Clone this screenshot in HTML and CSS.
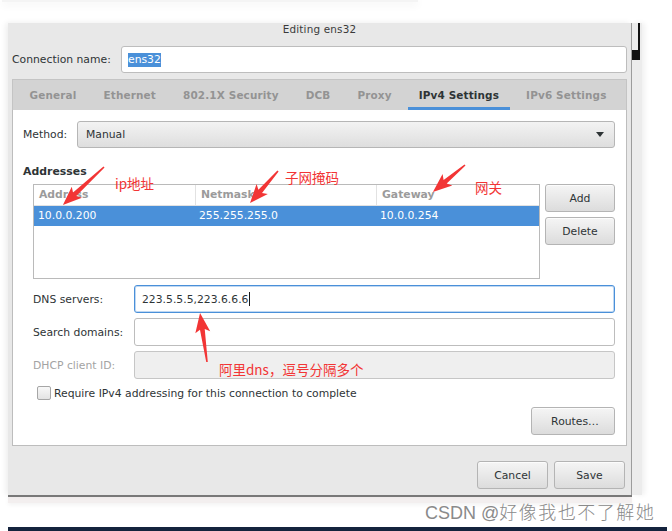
FILE: index.html
```html
<!DOCTYPE html>
<html lang="en">
<head>
<meta charset="utf-8">
<title>Editing ens32</title>
<link rel="stylesheet" href="styles.css">
</head>
<body>
<div class="topcard"></div>
<div class="stage">
  <div class="stage-row">
    <div class="window">
      <div class="titlebar">Editing ens32</div>
      <div class="conn-row">
        <span class="conn-label">Connection name:</span>
        <div class="entry conn-entry"><span class="sel">ens32</span></div>
      </div>
      <div class="notebook">
        <div class="tabs">
          <span class="tab">General</span>
          <span class="tab">Ethernet</span>
          <span class="tab">802.1X Security</span>
          <span class="tab">DCB</span>
          <span class="tab">Proxy</span>
          <span class="tab active">IPv4 Settings</span>
          <span class="tab">IPv6 Settings</span>
        </div>
        <div class="page">
          <div class="method-row">
            <span class="method-label">Method:</span>
            <div class="combo">
              <span>Manual</span>
              <svg class="combo-arrow" width="8" height="5" viewBox="0 0 8 5"><polygon points="0,0 8,0 4,5" fill="#2e3436"/></svg>
            </div>
          </div>
          <div class="section-title">Addresses</div>
          <div class="addr-row">
            <div class="table">
              <div class="trow thead">
                <div class="cell">Address</div>
                <div class="cell sep">Netmask</div>
                <div class="cell sep">Gateway</div>
              </div>
              <div class="trow selected">
                <div class="cell">10.0.0.200</div>
                <div class="cell">255.255.255.0</div>
                <div class="cell">10.0.0.254</div>
              </div>
            </div>
            <div class="side-buttons">
              <button class="btn">Add</button>
              <button class="btn">Delete</button>
            </div>
          </div>
          <div class="form">
            <div class="form-row">
              <span class="form-label">DNS servers:</span>
              <div class="entry focus">223.5.5.5,223.6.6.6<span class="caret"></span></div>
            </div>
            <div class="form-row">
              <span class="form-label">Search domains:</span>
              <div class="entry"></div>
            </div>
            <div class="form-row">
              <span class="form-label disabled">DHCP client ID:</span>
              <div class="entry disabled-entry"></div>
            </div>
          </div>
          <div class="check-row">
            <span class="checkbox"></span>
            <span>Require IPv4 addressing for this connection to complete</span>
          </div>
          <div class="routes-row">
            <button class="btn routes">Routes…</button>
          </div>
        </div>
      </div>
      <div class="footer">
        <button class="btn footer-btn">Cancel</button>
        <button class="btn footer-btn">Save</button>
      </div>
    </div>
    <div class="side-strip">
      <div class="thumb-line"></div>
      <div class="thumb-block"></div>
    </div>
  </div>
  <div class="underbar"></div>
  <div class="understrip"></div>
</div>
<div class="darkbar"></div>

<svg class="annot" width="672" height="531" viewBox="0 0 672 531">
  <g fill="#f23535">
    <g transform="translate(104 167) rotate(137.2)">
      <polygon points="0,-0.8 40,-2.4 37,-7.5 56,0 37,7.5 40,2.4 0,0.8"/>
    </g>
    <g transform="translate(278 171) rotate(131.2)">
      <polygon points="0,-0.8 27,-2.4 24,-7.5 42.5,0 24,7.5 27,2.4 0,0.8"/>
    </g>
    <g transform="translate(465 165) rotate(139.8)">
      <polygon points="0,-0.8 26,-2.4 23,-7.5 42,0 23,7.5 26,2.4 0,0.8"/>
    </g>
    <g transform="translate(207 362) rotate(-98.1)">
      <polygon points="0,-0.8 33,-2.4 30,-7.5 49.5,0 30,7.5 33,2.4 0,0.8"/>
    </g>
  </g>
</svg>
<div class="note note-ip">ip地址</div>
<div class="note note-mask">子网掩码</div>
<div class="note note-gw">网关</div>
<div class="note note-dns">阿里dns，逗号分隔多个</div>
<div class="watermark">CSDN @<span class="wm-cjk">好像我也不了解她</span></div>
</body>
</html>
```
FILE: styles.css
```css
* { box-sizing: border-box; }
html, body { margin: 0; padding: 0; }
body {
  width: 672px;
  height: 531px;
  overflow: hidden;
  position: relative;
  background: #ffffff;
  font-family: "DejaVu Sans", "Noto Sans CJK SC", sans-serif;
  font-size: 10.8px;
  color: #2e3436;
}

.topcard {
  width: 416px;
  height: 2px;
  margin-left: 2px;
  background: #f4f4f4;
  box-shadow: 0 2px 8px rgba(0, 0, 0, 0.12);
}

.stage {
  margin: 21px 0 0 8px;
  width: 634px;
}
.stage-row { display: flex; }

.window {
  width: 623px;
  height: 472px;
  display: flex;
  flex-direction: column;
  background: #e8e8e8;
  box-shadow: -2px 0 6px rgba(0, 0, 0, 0.08);
}

.titlebar {
  height: 20px;
  line-height: 13px;
  text-align: center;
  color: #3a3a3a;
  font-size: 10.4px;
  letter-spacing: 0.2px;
}

.conn-row {
  display: flex;
  align-items: center;
  height: 30px;
  padding: 3px 4px 0 4px;
}
.conn-label { width: 109px; }
.conn-entry { flex: 1; }

.entry {
  height: 28px;
  background: #ffffff;
  border: 1px solid #bdbdbd;
  border-radius: 3px;
  display: flex;
  align-items: center;
  padding-left: 7px;
}
.conn-entry { height: 27px; padding-left: 6px; }
.sel {
  background: #4a90d9;
  color: #ffffff;
  padding: 1px 0;
  line-height: 12px;
}
.entry.focus { border-color: #4a90d9; box-shadow: inset 0 0 0 1px rgba(74, 144, 217, 0.35); }
.caret {
  display: inline-block;
  width: 1px;
  height: 14px;
  background: #1a1a1a;
  margin-left: 1px;
}
.disabled-entry { background: #efefef; border-color: #c6c6c6; }

.notebook {
  margin: 6px 4px 0 4px;
  display: flex;
  flex-direction: column;
}
.tabs {
  height: 31px;
  display: flex;
  background: #d3d3d3;
  border: 1px solid #c4c4c4;
  border-bottom: none;
  padding-left: 3px;
}
.tab {
  position: relative;
  padding: 0 11px;
  margin: 0 2.5px;
  line-height: 30px;
  font-weight: bold;
  font-size: 10.45px;
  color: #939393;
  letter-spacing: 0.15px;
  white-space: nowrap;
}
.tab.active { color: #2e3436; }
.tab.active::after {
  content: "";
  position: absolute;
  left: 0;
  right: 0;
  bottom: 0;
  height: 3px;
  background: #4a90d9;
}

.page {
  height: 336px;
  background: #ffffff;
  border: 1px solid #bdbdbd;
  border-top: none;
  padding: 11px 11px 10px 10px;
}

.method-row {
  display: flex;
  align-items: center;
  height: 27px;
}
.method-label { width: 54px; }
.combo {
  flex: 1;
  height: 27px;
  display: flex;
  align-items: center;
  justify-content: space-between;
  padding: 0 10px 0 8px;
  border: 1px solid #b6b6b6;
  border-radius: 3px;
  background: linear-gradient(#f3f3f3, #dedede);
}

.section-title {
  margin-top: 17px;
  line-height: 14px;
  font-weight: bold;
  font-size: 10.9px;
}

.addr-row {
  display: flex;
  gap: 5px;
  margin-top: 5px;
  padding-left: 10px;
}
.table {
  width: 507px;
  height: 95px;
  border: 1px solid #bababa;
  background: #ffffff;
}
.trow {
  display: grid;
  grid-template-columns: 161px 181px 1fr;
}
.thead {
  height: 21px;
  line-height: 20px;
  font-weight: bold;
  color: #9b9b9b;
  border-bottom: 1px solid #e2e2e2;
}
.thead .cell { padding-left: 5px; }
.thead .cell.sep { border-left: 1px solid #e2e2e2; padding-left: 5px; }
.selected {
  height: 20px;
  line-height: 20px;
  background: #4a90d9;
  color: #ffffff;
}
.selected .cell { padding-left: 4px; }

.side-buttons {
  width: 70px;
  display: flex;
  flex-direction: column;
  gap: 5px;
}
.btn {
  height: 28px;
  padding: 0;
  font-family: "DejaVu Sans", sans-serif;
  font-size: 10.8px;
  color: #2e3436;
  border: 1px solid #b4b4b4;
  border-radius: 3px;
  background: linear-gradient(#f5f5f5, #dcdcdc);
  box-shadow: inset 0 1px 0 rgba(255, 255, 255, 0.7);
}

.form {
  margin-top: 6px;
  padding-left: 10px;
  display: flex;
  flex-direction: column;
  gap: 5px;
}
.form-row {
  display: flex;
  align-items: center;
  height: 28px;
}
.form-label { width: 101px; }
.form-label.disabled { color: #a3a3a3; }
.form-row .entry { flex: 1; }

.check-row {
  margin-top: 7px;
  height: 14px;
  display: flex;
  align-items: center;
  padding-left: 14px;
}
.checkbox {
  width: 14px;
  height: 14px;
  margin-right: 3px;
  border: 1px solid #a6a6a6;
  border-radius: 2px;
  background: linear-gradient(#f8f8f8, #e3e3e3);
}

.routes-row {
  margin-top: 7px;
  display: flex;
  justify-content: flex-end;
}
.routes { width: 84px; padding-left: 4px; }

.footer {
  display: flex;
  justify-content: flex-end;
  gap: 6px;
  padding: 15px 6px 0 0;
}
.footer-btn { width: 71px; }

.side-strip {
  width: 11px;
  height: 472px;
  border-left: 1px solid #9c9c9c;
  background: #ececec;
  box-shadow: 3px 0 5px rgba(0, 0, 0, 0.06);
}
.thumb-line {
  width: 2px;
  height: 27px;
  margin-left: 6px;
  background: #111111;
}
.thumb-block {
  width: 8px;
  height: 10px;
  background: #111111;
}

.underbar {
  width: 624px;
  height: 2px;
  background: #7c7c7c;
}
.understrip {
  width: 624px;
  height: 6px;
  background: #f3efef;
  box-shadow: 0 2px 4px rgba(0, 0, 0, 0.05);
}

.darkbar {
  margin: 24px 0 0 8px;
  width: 659px;
  height: 4px;
  background: #14233d;
}

.annot {
  position: absolute;
  left: 0;
  top: 0;
  pointer-events: none;
}
.note {
  position: absolute;
  font-family: "Noto Sans CJK SC", sans-serif;
  font-size: 13.5px;
  line-height: 14px;
  color: #f23535;
  white-space: nowrap;
}
.note-ip { left: 115px; top: 176px; }
.note-mask { left: 285px; top: 170px; }
.note-gw { left: 475px; top: 180px; }
.note-dns { left: 219px; top: 362px; }

.watermark {
  position: absolute;
  left: 425px;
  top: 500px;
  font-family: "Liberation Sans", "Noto Sans CJK SC", sans-serif;
  font-size: 18px;
  line-height: 22px;
  color: #8a8a8a;
  text-shadow: 0 0 1px #ffffff;
  white-space: nowrap;
}
.wm-cjk {
  font-family: "Noto Sans CJK SC", sans-serif;
  font-weight: 300;
  letter-spacing: 1.5px;
}
```
